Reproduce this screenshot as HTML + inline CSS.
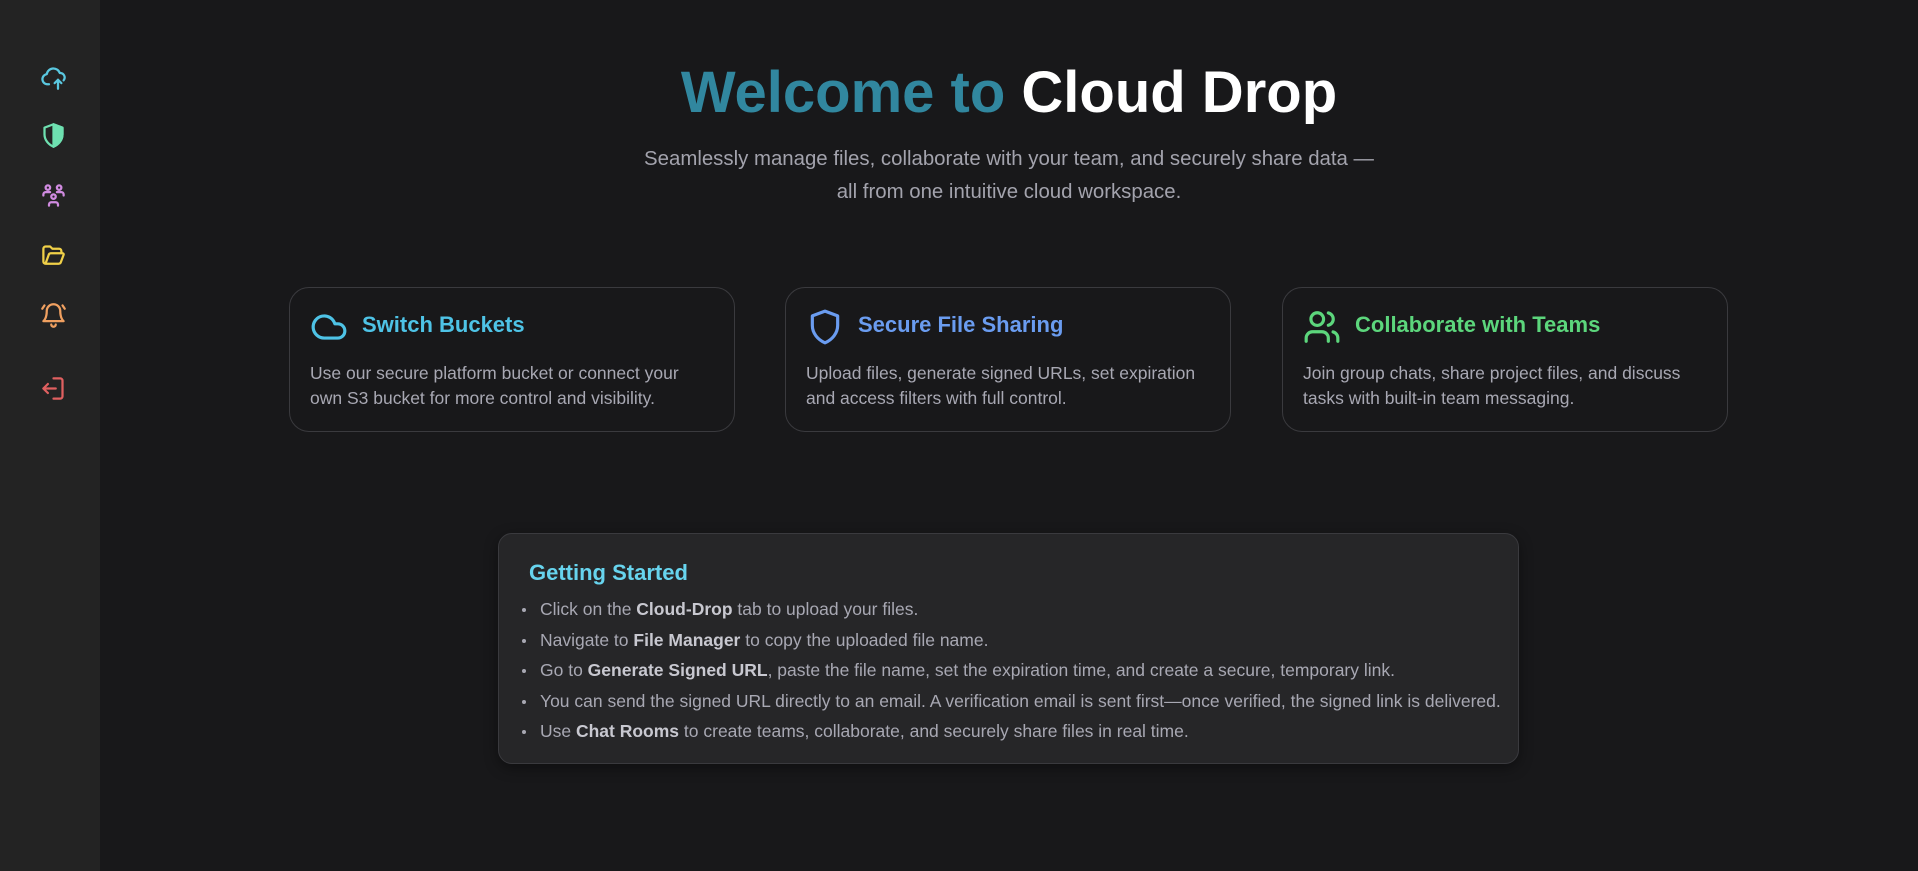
<!DOCTYPE html>
<html><head><meta charset="utf-8"><style>
*{margin:0;padding:0;box-sizing:border-box}
html,body{width:1918px;height:871px;overflow:hidden;background:#18181a;font-family:"Liberation Sans",Arial,sans-serif}
.side{position:absolute;left:0;top:0;width:100px;height:871px;background:#232323}
.side svg{position:absolute;left:40px;width:27px;height:27px;fill:none;stroke-width:2;stroke-linecap:round;stroke-linejoin:round}
h1{position:absolute;left:100px;right:0;top:58px;text-align:center;font-size:58px;font-weight:bold;color:#fff;line-height:70px}
h1 span{color:#31879f}
.sub{position:absolute;left:100px;right:0;top:143px;text-align:center;font-size:20.4px;line-height:33px;color:#a3a3ad}
.card{position:absolute;top:287px;width:446px;height:145px;border:1px solid #3a3a3e;border-radius:20px;background:#18181a}
.card .ic{position:absolute;left:20px;top:20px;width:38px;height:38px;fill:none;stroke-width:2;stroke-linecap:round;stroke-linejoin:round}
.card h3{position:absolute;left:72px;top:24px;font-size:22px;font-weight:bold}
.card p{position:absolute;left:20px;top:73px;width:385px;font-size:17.5px;line-height:25px;color:#a8a8b3}
.gs{position:absolute;left:498px;top:533px;width:1021px;height:231px;background:#262628;border:1px solid #3a3a3e;border-radius:14px;box-shadow:0 4px 14px rgba(0,0,0,.4)}
.gs h3{position:absolute;left:30px;top:26px;font-size:22px;color:#67d4ee;font-weight:bold}
.gs ul{position:absolute;left:23px;top:60px;list-style:none}
.gs li{font-size:17.5px;line-height:30.5px;color:#a8a8b3;position:relative;padding-left:18px;white-space:nowrap}
.gs li:before{content:"";position:absolute;left:0;top:14px;width:4px;height:4px;border-radius:50%;background:#a8a8b3}
.gs b{color:#c8c8d0}
</style></head><body>
<div class="side">
<svg style="top:64px" viewBox="0 0 24 24" stroke="#5ac8e0"><path d="M8 18H6.5A4.5 4.5 0 0 1 6 9.05 6 6 0 0 1 17.6 8 4 4 0 0 1 21 14.5"/><path d="M16 22v-8M13 17l3-3 3 3"/></svg>
<svg style="top:122px" viewBox="0 0 24 24" stroke="#6ee0b0"><path d="M12 2l8 3v6c0 5-3.5 9-8 11-4.5-2-8-6-8-11V5z"/><path d="M12 2v20c4.5-2 8-6 8-11V5z" fill="#6ee0b0"/></svg>
<svg style="top:182px" viewBox="0 0 24 24" stroke="#d08be0"><circle cx="7" cy="5" r="2"/><circle cx="17" cy="5" r="2"/><circle cx="12" cy="13" r="2"/><path d="M3 12v-1a2 2 0 0 1 2-2h4M21 12v-1a2 2 0 0 0-2-2h-4M8 21v-1a2 2 0 0 1 2-2h4a2 2 0 0 1 2 2v1"/></svg>
<svg style="top:242px" viewBox="0 0 24 24" stroke="#f0d048"><path d="M5 19l2.7-7.4A2 2 0 0 1 9.6 10H20a1 1 0 0 1 1 1.3L18.5 18a2 2 0 0 1-1.9 1.3H5a2 2 0 0 1-2-2V6a2 2 0 0 1 2-2h4l2 2h6a2 2 0 0 1 2 2v2"/></svg>
<svg style="top:302px" viewBox="0 0 24 24" stroke="#f0a060"><path d="M10 20a2 2 0 0 0 4 0M6 8a6 6 0 0 1 12 0c0 7 3 9 3 9H3s3-2 3-9"/><path d="M4 3L2 6M20 3l2 3"/></svg>
<svg style="top:375px" viewBox="0 0 24 24" stroke="#e06060"><path d="M12 3h6a2 2 0 0 1 2 2v14a2 2 0 0 1-2 2h-6M14 12H3M7 8l-4 4 4 4"/></svg>
</div>
<h1><span>Welcome to</span> Cloud Drop</h1>
<div class="sub">Seamlessly manage files, collaborate with your team, and securely share data —<br>all from one intuitive cloud workspace.</div>

<div class="card" style="left:289px"><svg class="ic" viewBox="0 0 24 24" stroke="#4ec3e6"><path d="M17.5 19H9a7 7 0 1 1 6.7-9h1.8a4.5 4.5 0 1 1 0 9z"/></svg><h3 style="color:#4ec3e6">Switch Buckets</h3><p>Use our secure platform bucket or connect your own S3 bucket for more control and visibility.</p></div>
<div class="card" style="left:785px"><svg class="ic" viewBox="0 0 24 24" stroke="#6a9cf0"><path d="M12 2l8 3v6c0 5-3.5 9-8 11-4.5-2-8-6-8-11V5z"/></svg><h3 style="color:#6a9cf0">Secure File Sharing</h3><p style="width:400px">Upload files, generate signed URLs, set expiration and access filters with full control.</p></div>
<div class="card" style="left:1282px"><svg class="ic" viewBox="0 0 24 24" stroke="#5cd67c"><circle cx="9" cy="7" r="4"/><path d="M2 21v-2a4 4 0 0 1 4-4h6a4 4 0 0 1 4 4v2M16 3.1a4 4 0 0 1 0 7.8M22 21v-2a4 4 0 0 0-3-3.9"/></svg><h3 style="color:#5cd67c">Collaborate with Teams</h3><p>Join group chats, share project files, and discuss tasks with built-in team messaging.</p></div>

<div class="gs"><h3>Getting Started</h3><ul>
<li>Click on the <b>Cloud-Drop</b> tab to upload your files.</li>
<li>Navigate to <b>File Manager</b> to copy the uploaded file name.</li>
<li>Go to <b>Generate Signed URL</b>, paste the file name, set the expiration time, and create a secure, temporary link.</li>
<li>You can send the signed URL directly to an email. A verification email is sent first—once verified, the signed link is delivered.</li>
<li>Use <b>Chat Rooms</b> to create teams, collaborate, and securely share files in real time.</li>
</ul></div>
</body></html>
